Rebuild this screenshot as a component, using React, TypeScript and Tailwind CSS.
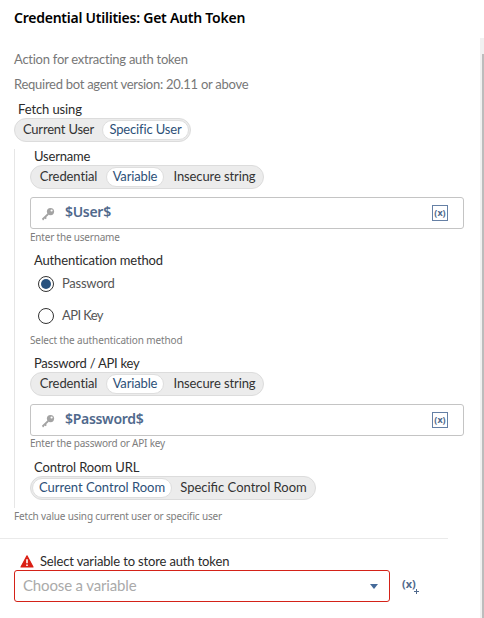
import type { ReactNode } from "react";

type Option = { text: string; className: string };

function Segmented({ options, selected, className }: { options: Option[]; selected: number; className: string }) {
  return (
    <div className={`flex h-6 items-center rounded-full border border-[#dcdcdc] bg-[#ececec] text-[13px] leading-4 ${className}`}>
      {options.map((o, i) => (
        <button
          key={o.text}
          className={`h-[20px] shrink-0 rounded-full border pb-[2px] whitespace-nowrap ${
            i === selected ? "border-[#dedede] bg-white text-[#2d5078]" : "border-transparent text-[#333]"
          } ${o.className}`}
        >
          {o.text}
        </button>
      ))}
    </div>
  );
}

const valueOptions: Option[] = [
  { text: "Credential", className: "w-[75px] tracking-[-0.1px]" },
  { text: "Variable", className: "w-[58px] tracking-[-0.15px]" },
  { text: "Insecure string", className: "w-[99px] pl-[2px] tracking-[-0.1px]" },
];

function Label({ children, className = "" }: { children: ReactNode; className?: string }) {
  return <div className={`pl-1 text-[13px] leading-[15px] whitespace-nowrap text-[#2b2b2b] ${className}`}>{children}</div>;
}

function Helper({ children, className = "" }: { children: ReactNode; className?: string }) {
  return <div className={`font-['Noto_Sans',sans-serif] text-[10px] leading-[14px] whitespace-nowrap text-[#7d7d7d] ${className}`}>{children}</div>;
}

function KeyIcon() {
  return (
    <svg className="mt-[2px]" width="14" height="14" viewBox="0 0 14 14" fill="none">
      <circle cx="9.5" cy="4.6" r="3.6" fill="#a3a3a3" />
      <circle cx="10.6" cy="3.5" r="1.1" fill="#fff" />
      <path d="M7.2 7 1.5 12.4M3.8 10.2l1.4 1.4M1.8 11.9l.9.9" stroke="#a3a3a3" strokeWidth="1.8" />
    </svg>
  );
}

function ValueInput({ value, className }: { value: string; className: string }) {
  return (
    <div className="mt-2 flex h-8 w-[434px] items-center rounded-[3px] border border-[#c4c4c4] pr-[15px] pl-[10px]">
      <KeyIcon />
      <span className={`ml-[10px] pb-[2px] font-['Noto_Sans',sans-serif] text-[14px] leading-[18px] font-semibold text-[#50698c] ${className}`}>{value}</span>
      <span className="ml-auto flex h-4 w-4 items-center justify-center border border-[#6580a5] pb-px font-['Noto_Sans',sans-serif] text-[9px] leading-none font-bold text-[#50698c]">
        (x)
      </span>
    </div>
  );
}

function Radio({ checked, text, className }: { checked: boolean; text: string; className: string }) {
  return (
    <div className="flex h-8 items-center pl-2">
      <span className="flex h-4 w-4 items-center justify-center rounded-full border border-[#333]">
        {checked && <span className="h-[10px] w-[10px] rounded-full bg-[#28527f]" />}
      </span>
      <span className={`ml-2 pb-[3px] text-[13px] leading-4 text-[#555] ${className}`}>{text}</span>
    </div>
  );
}

export default function App() {
  return (
    <div className="flex h-[618px] w-[484px] overflow-hidden bg-white font-[Lato,sans-serif]">
      <main className="w-[480px] shrink-0 pl-[14px]">
        <h1 className="pt-2 font-['Noto_Sans',sans-serif] text-[14px] leading-5 font-semibold tracking-[-0.24px] text-black">Credential Utilities: Get Auth Token</h1>
        <p className="mt-[22px] text-[13px] leading-[18px] tracking-[-0.25px] text-[#777]">Action for extracting auth token</p>
        <p className="mt-[7px] text-[13px] leading-[18px] tracking-[-0.27px] text-[#777]">Required bot agent version: 20.11 or above</p>
        <Label className="mt-[9px] tracking-[-0.1px]">Fetch using</Label>
        <Segmented
          className="mt-[1px] w-[177px]"
          selected={1}
          options={[
            { text: "Current User", className: "w-[87px] tracking-[-0.2px]" },
            { text: "Specific User", className: "w-[87px] tracking-[-0.15px]" },
          ]}
        />
        <section className="mt-[7px] h-[359px] border-l border-[#e6e6e6] pl-[15px]">
          <Label className="tracking-[-0.2px]">Username</Label>
          <Segmented className="mt-px w-[234px]" selected={1} options={valueOptions} />
          <ValueInput value="$User$" className="tracking-[-0.3px]" />
          <Helper className="mt-px tracking-[-0.2px]">Enter the username</Helper>
          <Label className="mt-[9px] tracking-[-0.15px]">Authentication method</Label>
          <Radio checked text="Password" className="tracking-[-0.25px]" />
          <Radio checked={false} text="API Key" className="tracking-[-0.6px]" />
          <Helper className="mt-[1px] tracking-[-0.12px]">Select the authentication method</Helper>
          <Label className="mt-[9px] tracking-[-0.25px]">Password / API key</Label>
          <Segmented className="mt-[1px] w-[234px]" selected={1} options={valueOptions} />
          <ValueInput value="$Password$" className="tracking-[-0.3px]" />
          <Helper className="mt-0 tracking-[-0.2px]">Enter the password or API key</Helper>
          <Label className="mt-[10px] tracking-[-0.1px]">Control Room URL</Label>
          <Segmented
            className="mt-px w-[286px]"
            selected={0}
            options={[
              { text: "Current Control Room", className: "ml-px w-[140px]" },
              { text: "Specific Control Room", className: "w-[143px]" },
            ]}
          />
        </section>
        <Helper className="mt-px tracking-[-0.16px]">Fetch value using current user or specific user</Helper>
        <hr className="mt-[15px] -ml-[14px] w-[448px] border-[#eaeaea]" />
        <div className="mt-[14px] flex h-[17px] items-center pl-[6px]">
          <svg width="14" height="13" viewBox="0 0 14 13">
            <path d="M7 .9 13 12H1Z" fill="#da1f14" stroke="#da1f14" strokeWidth="1.2" strokeLinejoin="round" />
            <path d="M7 4.2v4M7 9.5v1.5" stroke="#fff" strokeWidth="1.6" />
          </svg>
          <span className="ml-[6px] text-[13px] leading-[17px] tracking-[-0.15px] text-[#2b2b2b]">Select variable to store auth token</span>
        </div>
        <div className="flex items-center">
          <div className="flex h-8 w-[376px] items-center justify-between rounded-[3px] border border-[#d42218] pr-[11px] pl-2">
            <span className="pb-[3px] text-[15px] leading-[18px] tracking-[-0.15px] text-[#aaa]">Choose a variable</span>
            <svg width="8" height="5" viewBox="0 0 8 5"><path d="M0 0h8L4 5Z" fill="#456a9a" /></svg>
          </div>
          <span className="relative ml-[12px] pb-1 font-['Noto_Sans',sans-serif] text-[11px] leading-4 font-bold text-[#50698c]">
            (x)
            <svg className="absolute -right-[3px] bottom-[2px]" width="5" height="5" viewBox="0 0 5 5"><path d="M2.5 0v5M0 2.5h5" stroke="#50698c" /></svg>
          </span>
        </div>
      </main>
      <div className="mt-[38px] w-1 shrink-0 bg-[#f1f1f1] pt-4 pl-[2px]">
        <div className="h-full bg-[#bdbdbd]" />
      </div>
    </div>
  );
}
